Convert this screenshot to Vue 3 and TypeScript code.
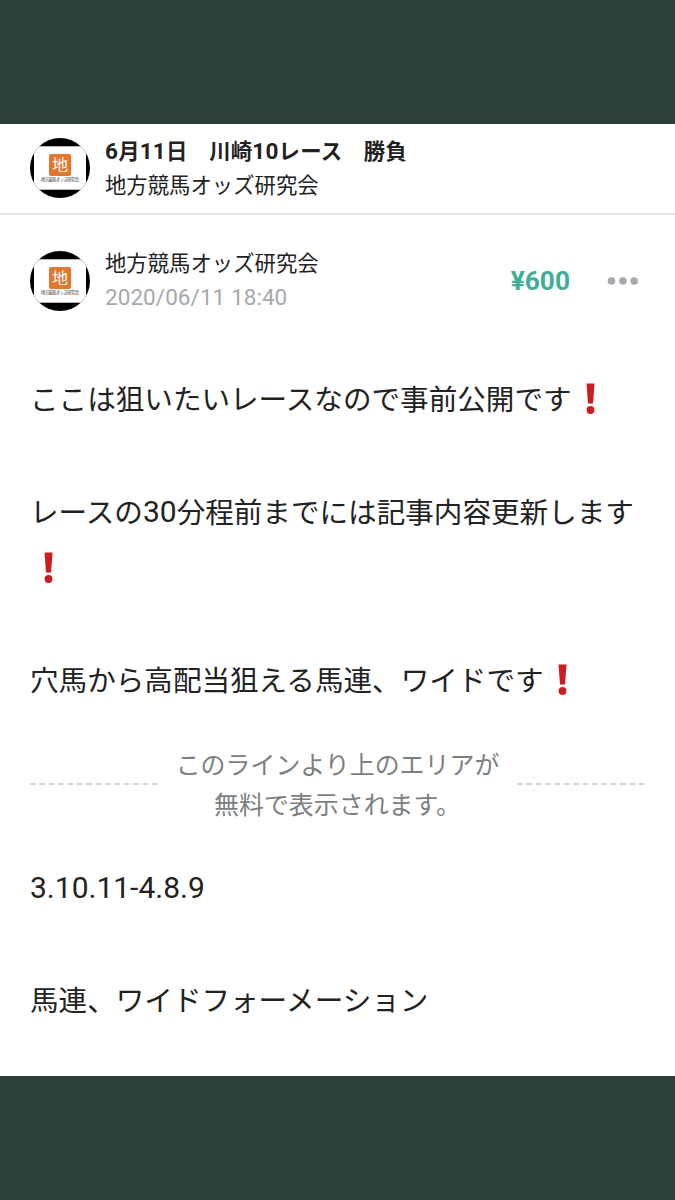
<script setup lang="ts">
const author = '地方競馬オッズ研究会'

interface Piece {
  text: string
  latin?: boolean
}

interface Line {
  pieces: Piece[]
  alert?: boolean
}

const freeLines: Line[] = [
  { pieces: [{ text: 'ここは狙いたいレースなので事前公開です' }], alert: true },
  { pieces: [] },
  {
    pieces: [
      { text: 'レースの' },
      { text: '30', latin: true },
      { text: '分程前までには記事内容更新します' },
    ],
  },
  { pieces: [], alert: true },
  { pieces: [] },
  { pieces: [{ text: '穴馬から高配当狙える馬連、ワイドです' }], alert: true },
]

const paidLines: Line[] = [
  { pieces: [{ text: '3.10.11-4.8.9', latin: true }] },
  { pieces: [] },
  { pieces: [{ text: '馬連、ワイドフォーメーション' }] },
]

const blocks = [
  { name: 'free', lines: freeLines },
  { name: 'paid', lines: paidLines },
]
</script>

<template>
  <div class="screen">
    <main class="page">
      <header class="topbar">
        <svg class="avatar" viewBox="0 0 60 60">
          <rect width="60" height="60" fill="#000" />
          <rect x="4" y="8.300" width="52" height="43.400" fill="#fff" />
          <rect x="19" y="16" width="22" height="22" rx="2" fill="#e3772e" />
          <text class="logo" x="30" y="32.500" text-anchor="middle">地</text>
          <text class="caption" x="30" y="43.200" text-anchor="middle" textLength="38">{{ author }}</text>
        </svg>
        <div class="names">
          <h1 class="title"><span class="latin">6</span>月<span class="latin">11</span>日　川崎<span class="latin">10</span>レース　勝負</h1>
          <div class="author">{{ author }}</div>
        </div>
      </header>

      <section class="meta">
        <svg class="avatar" viewBox="0 0 60 60">
          <rect width="60" height="60" fill="#000" />
          <rect x="4" y="8.300" width="52" height="43.400" fill="#fff" />
          <rect x="19" y="16" width="22" height="22" rx="2" fill="#e3772e" />
          <text class="logo" x="30" y="32.500" text-anchor="middle">地</text>
          <text class="caption" x="30" y="43.200" text-anchor="middle" textLength="38">{{ author }}</text>
        </svg>
        <div class="names">
          <div class="author">{{ author }}</div>
          <time class="date">2020/06/11 18:40</time>
        </div>
        <div class="price">¥600</div>
        <svg class="more" viewBox="0 0 32 8">
          <circle cx="4.500" cy="4" r="3.800" />
          <circle cx="15.900" cy="4" r="3.800" />
          <circle cx="27.200" cy="4" r="3.800" />
        </svg>
      </section>

      <template v-for="block in blocks" :key="block.name">
        <div v-if="block.name === 'paid'" class="divider">
          <svg class="dash" viewBox="0 0 128 2"><path d="M0 1H128" /></svg>
          <p class="notice">このラインより上のエリアが<br />無料で表示されます。</p>
          <svg class="dash" viewBox="0 0 128 2"><path d="M0 1H128" /></svg>
        </div>
        <div class="body" :class="block.name">
          <div v-for="(line, i) in block.lines" :key="i" class="line">
            <span v-for="(piece, j) in line.pieces" :key="j" :class="piece.latin ? 'latin' : 'kanji'">{{ piece.text }}</span>
            <svg v-if="line.alert" class="alert" viewBox="0 0 36 34">
              <path d="M14.500 1.500H22.500L21 21.500H16Z" />
              <circle cx="18.500" cy="28" r="3.900" />
            </svg>
          </div>
        </div>
      </template>
    </main>
  </div>
</template>

<style>
body {
  margin: 0;
  background: #2e403c;
}
</style>

<style scoped>
.screen {
  box-sizing: border-box;
  width: 675px;
  height: 1200px;
  padding: 124px 0;
  background: #2e403c;
  color: #222;
  font-family: Roboto, "Noto Sans CJK JP", sans-serif;
  overflow: hidden;
}

.page {
  height: 952px;
  background: #fff;
  overflow: hidden;
}

.topbar,
.meta {
  display: flex;
  align-items: center;
  box-sizing: border-box;
  padding: 0 30px;
}

.topbar {
  height: 91px;
  padding-bottom: 1px;
  border-bottom: 2px solid #e4e4e4;
}

.topbar .names {
  padding-top: 1px;
}

.meta {
  height: 131px;
}

.avatar {
  flex: none;
  width: 60px;
  height: 60px;
  margin-right: 15px;
  border-radius: 50%;
}

.logo {
  font-size: 16px;
  fill: #fff;
}

.caption {
  font-size: 4.200px;
  fill: #333;
}

.names {
  flex: 1;
  white-space: nowrap;
}

.title {
  margin: 0;
  font-size: 21.375px;
  font-weight: 700;
  letter-spacing: 0.220px;
  line-height: 33.750px;
}

.title .latin {
  font-size: 22.500px;
}

.author {
  font-size: 21.375px;
  line-height: 33.750px;
}

.date {
  display: block;
  color: #a6a8ad;
  font-size: 22.500px;
  letter-spacing: 0.060px;
  line-height: 32.750px;
}

.price {
  margin-right: 37px;
  color: #3eae96;
  font-size: 26.250px;
  font-weight: 700;
}

.more {
  width: 32px;
  height: 8px;
  margin-right: 6px;
  fill: #a7a7ae;
}

.body {
  padding: 0 30px;
  font-size: 28.580px;
}

.free {
  margin-top: 25px;
}

.line {
  display: flex;
  align-items: center;
  height: 56.250px;
  line-height: 56.250px;
  white-space: nowrap;
}

.line .latin {
  font-size: 30px;
}

.kanji {
  padding-top: 2px;
}

.alert {
  width: 36px;
  height: 34px;
  fill: #cd1b20;
}

.divider {
  display: flex;
  align-items: center;
  justify-content: space-between;
  height: 80px;
  margin: 35px 30px 36px;
}

.dash {
  width: 128px;
  height: 2px;
  fill: none;
  stroke: #c6c6c6;
  stroke-width: 1.500;
  stroke-dasharray: 5.600 3.780;
}

.notice {
  margin: 0;
  padding-top: 4px;
  color: #7c7f7f;
  font-size: 24.940px;
  line-height: 39.400px;
  text-align: center;
}
</style>
